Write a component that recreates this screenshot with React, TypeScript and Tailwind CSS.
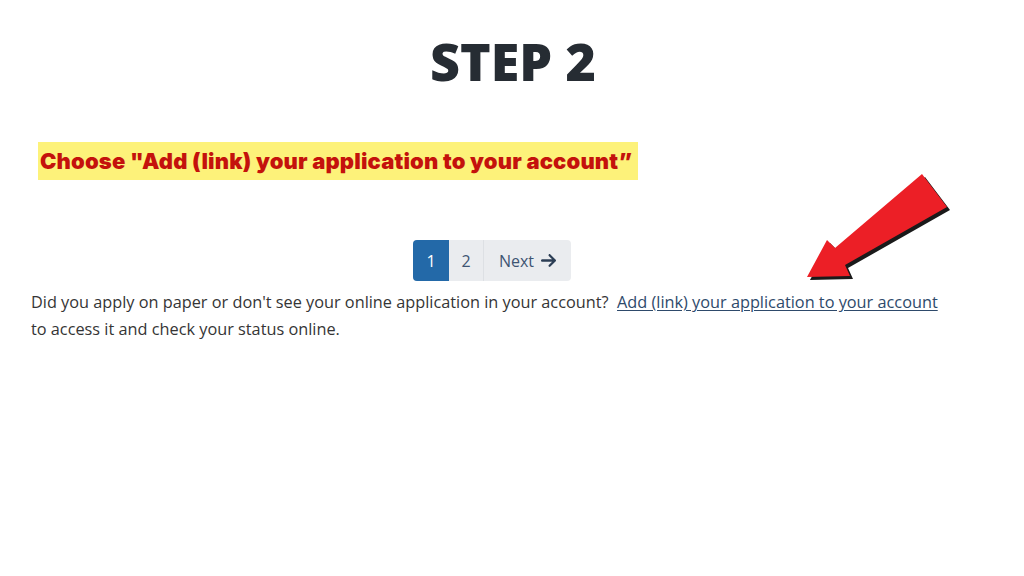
import React from "react";

function RedArrow() {
  const pts = "807,277 827,240 835,248 922,174 947,207 845,265 850,276";
  return (
    <svg
      className="absolute left-0 top-0 pointer-events-none"
      width={1024}
      height={576}
      viewBox="0 0 1024 576"
    >
      <polygon points={pts} fill="#1a1a1a" transform="translate(3,3)" />
      <polygon points={pts} fill="#ec1f26" />
    </svg>
  );
}

function ArrowRight() {
  return (
    <svg width="15" height="15" viewBox="0 0 448 448" className="block">
      <path
        fill="currentColor"
        d="M440 246c13-13 13-31 0-44L280 42c-13-13-33-13-46 0s-13 33 0 46l97 96H40c-22 0-40 18-40 40s18 40 40 40h291l-97 96c-13 13-13 33 0 46s33 13 46 0z"
      />
    </svg>
  );
}

export default function App() {
  return (
    <div className="relative w-[1024px] h-[576px] bg-white overflow-hidden">
      <div className="flex flex-col">
        <h1
          className="text-center text-[52px] leading-none font-extrabold text-[#262c33] mt-[35px] pl-[2px]"
          style={{ fontFamily: '"Open Sans", sans-serif' }}
        >
          STEP 2
        </h1>

        <div className="mt-[55px] ml-[38px] flex">
          <div
            className="bg-[#fdf27a] h-[38px] pl-[2px] pr-[6px] flex items-center text-[22px] tracking-[0.15px] font-black text-[#c4120c]"
            style={{ fontFamily: 'Inter, "Liberation Sans", sans-serif' }}
          >
            Choose "Add (link) your application to your account”
          </div>
        </div>

        <div
          className="mt-[60px] ml-[31px] w-[922px]"
          style={{ fontFamily: '"Open Sans", sans-serif' }}
        >
          <div className="flex justify-center">
            <div className="flex h-[41px] rounded-[4px] overflow-hidden bg-[#eaecef] text-[16px]">
              <div className="w-[36px] flex items-center justify-center bg-[#2369a8] text-white">
                1
              </div>
              <div className="w-[35px] flex items-center justify-center text-[#3e5573] border-r border-[#dde0e4]">
                2
              </div>
              <div className="w-[87px] flex items-center justify-center gap-[7px] text-[#3e5573]">
                <span>Next</span>
                <span className="text-[#2c3e55]">
                  <ArrowRight />
                </span>
              </div>
            </div>
          </div>

          <p className="mt-[8px] text-[16.3px] leading-[27px] text-[#353535]">
            Did you apply on paper or don't see your online application in your account?{"\u00a0 "}
            <a className="text-[#2e4a6b] underline underline-offset-2" href="#">
              Add (link) your application to your account
            </a>
            <br />
            to access it and check your status online.
          </p>
        </div>
      </div>
      <RedArrow />
    </div>
  );
}
